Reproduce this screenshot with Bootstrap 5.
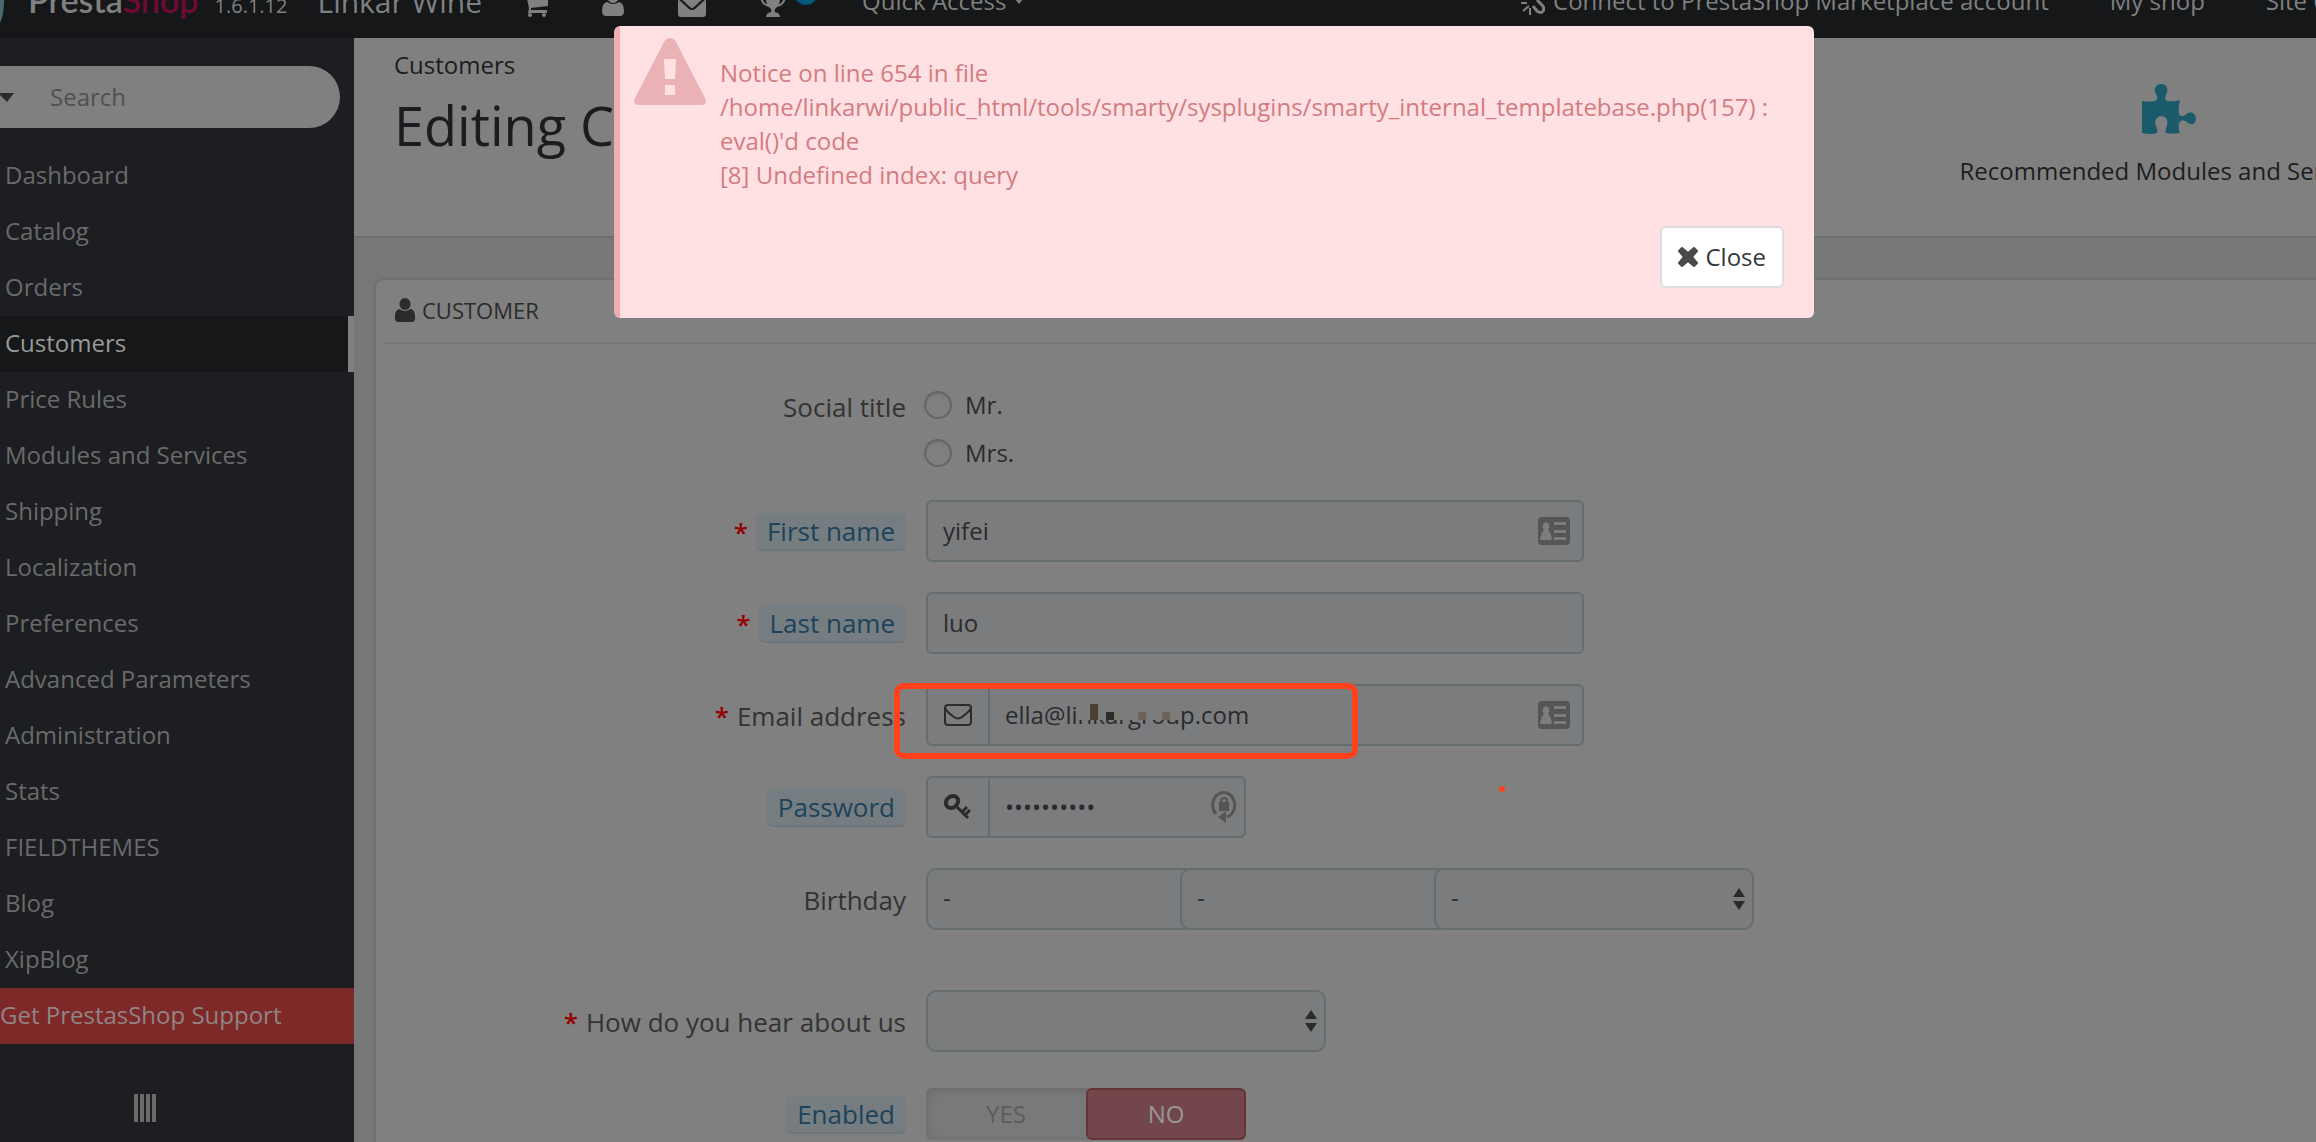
<!DOCTYPE html>
<html lang="en">
<head>
<meta charset="utf-8">
<meta name="viewport" content="width=device-width, initial-scale=1">
<title>Editing Customer</title>
<link rel="stylesheet" href="https://cdn.jsdelivr.net/npm/bootstrap@5.3.0/dist/css/bootstrap.min.css">
<style>
body{font-family:"Open Sans","Noto Sans",sans-serif;font-size:24px;line-height:34px;background:#767877;color:#2b2b2b;min-height:100vh;overflow:hidden}
svg{display:block;fill:currentColor;flex:none}
svg.line-icon{fill:none;stroke:currentColor}
a{text-decoration:none;color:inherit}
/* top bar */
.topbar{height:38px;background:#151718;color:#7f8080;overflow:hidden}
.topbar-inner{height:60px;margin-top:-29px;white-space:nowrap}
.brand-ball{width:16px;height:50px;margin-left:-12px;border-radius:50%;background:#4b6a70}
.brand-row{margin-left:24px;gap:16px}
.brand-name{font:600 34px/40px Lato,"Open Sans",sans-serif;color:#808080}
.brand-name span{color:#6f0a35}
.version{font-size:20px}
.shop-name{font-size:30px;margin-left:14px}
.top-icons{margin-left:44px;gap:54px}
.top-badge{width:24px;height:24px;border-radius:50%;background:#00587d;left:34px;top:-4px}
.quick{margin-left:76px;gap:8px}
.top-right{margin-right:-16px;gap:61px}
/* sidebar */
.sidebar{width:354px;background:#1c1e22;color:#6a6a6a}
.search-pill{height:62px;margin:28px 14px 20px 0;border-radius:0 31px 31px 0;background:#808080;color:#2b2b2b;gap:34px}
.search-pill input{background:none;border:0;outline:0;min-width:0;flex:1;padding:0}
.search-pill input::placeholder{color:#505050;opacity:1}
.side-link{height:56px;padding:0 0 2px 5px;display:flex;align-items:center}
.side-link.current{background:#151718;color:#999;border-right:6px solid #808080}
.side-link.support{background:#7e2827;color:#8f8585;padding-left:0}
.fold-btn{margin:50px 0 0 134px;gap:2px;background:none;border:0;padding:0}
.fold-btn i{width:4px;height:28px;background:#6a6a6a}
/* page header */
.page-head{height:200px;background:#808080;border-bottom:2px solid #6f6f6f;color:#1b1c1f;padding:10px 0 0 40px}
.page-title{font-size:54px;line-height:64px;font-weight:400;margin:11px 0 0}
.toolbar-link{margin:36px -62px 0 0;color:#1d1d1d;gap:20px}
.toolbar-link svg{color:#1a5a6a}
/* panel */
.customer-panel{margin:40px 0 0 20px;background:#808080;border:2px solid #707070;border-width:2px 0 0 2px;border-radius:10px 0 0 0;padding-left:8px}
.panel-title{height:64px;border-bottom:2px solid #777;padding:0 0 2px 10px;gap:6px;font-size:22px;line-height:34px;font-weight:400;margin:0}
.form-area{padding-top:44px}
.form-line{display:flex;align-items:center;gap:20px;margin-bottom:30px}
.form-line.gap-after{margin-bottom:60px}
.form-line.gap-less{margin-bottom:36px}
.label-side{width:522px;font-size:26px;color:#333;gap:8px;padding-top:2px}
.hint{background:#767d80;border-bottom:2px solid #6d777b;border-radius:6px;color:#1c435b;height:38px;line-height:36px;padding:0 11px}
.req{color:#970000;font-weight:600}
.field{height:62px;background:#7b7c7e;border:2px solid #656d70;border-radius:6px;color:#2b2b2b;display:flex;align-items:center;position:relative}
.field input{background:none;border:0;outline:0;color:inherit;flex:1;min-width:0;padding:0 15px 2px;height:100%}
.w-long{width:658px}
.w-short{width:320px}
.w-mid{width:400px}
.addon{width:62px;height:100%;border-right:2px solid #656d70}
.tail{margin-right:12px;color:#555}
.w-short .tail{margin-right:7px}
.picker{appearance:none;height:62px;background:#7b7c7e;border:2px solid #656d70;border-radius:10px;color:#2b2b2b;padding:0 15px 2px;width:100%;display:block}
.picker-wrap{position:relative}
.picker-wrap svg{position:absolute;right:9px;top:20px;pointer-events:none}
.birth .picker-wrap{width:254px}
.birth .picker-wrap:not(:last-child) .picker{width:270px;border-right:0}
.birth .picker-wrap:last-child{width:320px}
.titles{gap:14px}
.titles label{height:34px;gap:13px}
.titles input{appearance:none;width:28px;height:28px;margin:0 0 0 -2px;border:2px solid #666;border-radius:50%;background:#808080;box-shadow:inset 0 2px 2px #747474}
.switch{width:320px;height:52px;border-radius:6px;background:#797979;box-shadow:inset 0 2px 8px #686868}
.switch label{width:50%;color:#5c5c5c}
.switch .on{background:#72464a;border:2px solid #653434;border-radius:6px;color:#979797}
/* error notice */
.notice{position:absolute;left:614px;top:26px;width:1200px;height:292px;background:#ffe1e3;border-left:6px solid #ecafb4;border-radius:6px;color:#d27c82;padding:12px 30px 30px 14px}
.notice-tri{color:#eab2b7}
.notice-text{margin:18px 0 0 14px}
.close-btn,.close-btn:hover{background:#fff;border:2px solid #ddd;border-radius:6px;color:#33383d;font-size:24px;height:62px;padding:0 16px;gap:7px}
/* pen marks drawn over the form */
.pen-frame{position:absolute;left:-34px;top:-3px;width:464px;height:76px;border:6px solid #ff421b;border-radius:10px;pointer-events:none}
.pen-dot{position:absolute;left:571px;top:100px;width:6px;height:6px;border-radius:50%;background:#ff421b}
.blot{position:absolute;left:150px;top:14px}
</style>
<script src="https://cdn.jsdelivr.net/npm/bootstrap@5.3.0/dist/js/bootstrap.bundle.min.js"></script>
</head>
<body class="d-flex flex-column">
<svg width="0" height="0" class="position-absolute" aria-hidden="true">
<symbol id="i-user" viewBox="0 0 22 26"><ellipse cx="11" cy="6.5" rx="6" ry="6.5"/><path d="M5 12q6 4 12 0 5 1 5 9 0 5-4 5H4q-4 0-4-5 0-8 5-9z"/></symbol>
<symbol id="i-card" viewBox="0 0 32 28"><path fill-rule="evenodd" d="M4 0h24q4 0 4 4v20q0 4-4 4H4q-4 0-4-4V4q0-4 4-4zM8 5a4 4.500 0 0 0-2 8q-3 2-4 10h12q-1-8-4-10a4 4.500 0 0 0-2-8zM16 5v3h12V5zm0 8v3h12v-3zm0 7v3h12v-3z"/></symbol>
<symbol id="i-sort" viewBox="0 0 12 22"><path d="M6 0l6 9H0zM6 22l6-9H0z"/></symbol>
</svg>
<header class="topbar flex-shrink-0"><div class="topbar-inner d-flex align-items-center">
<span class="brand-ball"></span>
<div class="brand-row d-flex align-items-baseline"><a href="#" class="brand-name">Presta<span>Shop</span></a><span class="version">1.6.1.12</span><a href="#" class="shop-name">Linkar Wine</a></div>
<div class="top-icons d-flex">
<a href="#" aria-label="Orders"><svg width="22" height="32" viewBox="0 0 22 32"><path d="M0 6h4l1 3h17v12L5 23v2h16v3H2l1-5L0 9z"/><circle cx="4" cy="30" r="2"/><circle cx="18" cy="30" r="2"/></svg></a>
<a href="#" aria-label="Customers" class="pt-1"><svg width="22" height="28"><use href="#i-user"/></svg></a>
<a href="#" aria-label="Messages"><svg width="28" height="32" viewBox="0 0 28 32"><path d="M2 9h24q2 0 2 2l-12 11q-2 2-4 0L0 11q0-2 2-2zM0 14l11 10q3 2 6 0l11-10v15q0 3-3 3H3q-3 0-3-3z"/></svg></a>
<a href="#" aria-label="Badges" class="position-relative"><svg width="26" height="32" viewBox="0 0 26 32"><path d="M6 6h14v8q0 6-4 9-2 2-1 4 5 1 5 5H6q0-4 5-5 1-2-1-4-4-3-4-9z"/><path d="M6 10H1q0 10 9 11m10-11h5q0 10-9 11" fill="none" stroke="currentColor" stroke-width="2"/></svg><span class="top-badge position-absolute"></span></a>
</div>
<a href="#" class="quick d-flex align-items-center">Quick Access<svg width="10" height="8" viewBox="0 0 10 8"><path d="M0 1h10L5 7z"/></svg></a>
<nav class="top-right d-flex ms-auto"><a href="#" class="d-flex align-items-center gap-2"><svg class="line-icon" width="24" height="28" viewBox="0 0 24 28" stroke-width="2"><path d="M0 16h6M2 24l6-5M9 28v-7"/><path d="M12 19l4 5q4 3 6 0t-1-6l-5-5" stroke-width="3"/></svg>Connect to PrestaShop Marketplace account</a><a href="#">My shop</a><a href="#">Site O</a></nav>
</div></header>
<div class="d-flex flex-grow-1">
<nav class="sidebar flex-shrink-0">
<form class="search-pill d-flex align-items-center"><svg width="16" height="10" viewBox="0 0 16 10"><path d="M-2 1h16L7 10z"/></svg><input type="search" placeholder="Search" aria-label="Search"></form>
<a class="side-link" href="#">Dashboard</a>
<a class="side-link" href="#">Catalog</a>
<a class="side-link" href="#">Orders</a>
<a class="side-link current" href="#">Customers</a>
<a class="side-link" href="#">Price Rules</a>
<a class="side-link" href="#">Modules and Services</a>
<a class="side-link" href="#">Shipping</a>
<a class="side-link" href="#">Localization</a>
<a class="side-link" href="#">Preferences</a>
<a class="side-link" href="#">Advanced Parameters</a>
<a class="side-link" href="#">Administration</a>
<a class="side-link" href="#">Stats</a>
<a class="side-link" href="#">FIELDTHEMES</a>
<a class="side-link" href="#">Blog</a>
<a class="side-link" href="#">XipBlog</a>
<a class="side-link support" href="#">Get PrestasShop Support</a>
<button type="button" class="fold-btn d-flex" aria-label="Collapse menu"><i></i><i></i><i></i><i></i></button>
</nav>
<main class="flex-grow-1 d-flex flex-column">
<div class="page-head d-flex justify-content-between">
<div><a href="#">Customers</a><h1 class="page-title">Editing Customer</h1></div>
<a href="#" class="toolbar-link d-flex flex-column align-items-center text-nowrap"><svg width="54" height="50" viewBox="0 0 54 50"><path d="M0 17Q7 18 13 17 17 15 14 10 12 6 13 4 15 0 19 0 24 0 25 4 26 7 24 11 22 15 25 17 31 18 38 16 36 24 37 30 39 34 43 31 47 27 51 29 54 31 54 34 54 38 51 40 48 41 45 38 40 34 37 39 36 44 38 49 31 50 24 49 23 46 25 41 26 36 24 34 19 30 15 34 12 37 14 42 16 46 15 49 8 51 0 49z"/></svg>Recommended Modules and Services</a>
</div>
<section class="customer-panel flex-grow-1">
<h2 class="panel-title d-flex align-items-center"><svg width="22" height="24"><use href="#i-user"/></svg>CUSTOMER</h2>
<form class="form-area">
<div class="form-line align-items-start"><div class="label-side d-flex justify-content-end flex-shrink-0">Social title</div>
<div class="titles d-flex flex-column"><label class="d-flex align-items-center"><input type="radio" name="t">Mr.</label><label class="d-flex align-items-center"><input type="radio" name="t">Mrs.</label></div></div>
<div class="form-line"><label for="fn" class="label-side d-flex align-items-center justify-content-end flex-shrink-0"><span class="req">*</span><span class="hint">First name</span></label>
<div class="field w-long"><input id="fn" type="text" value="yifei"><svg class="tail" width="32" height="28"><use href="#i-card"/></svg></div></div>
<div class="form-line"><label for="ln" class="label-side d-flex align-items-center justify-content-end flex-shrink-0"><span class="req">*</span><span class="hint">Last name</span></label>
<div class="field w-long"><input id="ln" type="text" value="luo"></div></div>
<div class="form-line"><label for="em" class="label-side d-flex align-items-center justify-content-end flex-shrink-0"><span class="req">*</span><span>Email address</span></label>
<div class="field w-long"><span class="addon d-flex align-items-center justify-content-center"><svg class="line-icon" width="28" height="22" viewBox="0 0 28 22" stroke-width="2"><rect x="1" y="1" width="26" height="20" rx="3"/><path d="M1 4q2 4 9 9 4 3 8 0 7-5 9-9"/></svg></span><input id="em" type="text" value="ella@linkargroup.com"><svg class="tail" width="32" height="28"><use href="#i-card"/></svg>
<svg class="blot" width="104" height="20" viewBox="0 0 104 20"><path fill="#7b7c7e" d="M0 0h102v20H0z"/><path fill="#7d7b74" d="M0 12h4v6H0zM36 12h8v8h-8zM92 12h8v8h-8z"/><path fill="#4c4033" d="M12 4h8v16h-8z"/><path fill="#2b2b2b" d="M28 12h8v8h-8z"/><path fill="#6e6157" d="M60 12h8v8h-8zM84 12h8v8h-8z"/></svg>
<span class="pen-frame"></span><span class="pen-dot"></span></div></div>
<div class="form-line"><label for="pw" class="label-side d-flex align-items-center justify-content-end flex-shrink-0"><span class="hint">Password</span></label>
<div class="field w-short"><span class="addon d-flex align-items-center justify-content-center"><svg class="line-icon" width="28" height="26" viewBox="0 0 28 26" stroke-width="4"><ellipse cx="8" cy="8" rx="6.500" ry="5.500" transform="rotate(-40 8 8)"/><path d="M12 12l12 12M18 18l5-5M21 21l5-5" stroke-width="3"/></svg></span><input id="pw" type="password" value="abcdefghij"><svg class="tail" width="26" height="34" viewBox="0 0 26 34"><path d="M5 24A11 12.500 0 1 1 16 27" fill="none" stroke="currentColor" stroke-width="3"/><path d="M7 27l8-6v12zM8 12h10v9H8z"/><path d="M10 13v-2q0-3 3-3t3 3v2" fill="none" stroke="currentColor" stroke-width="2"/></svg></div></div>
<div class="form-line gap-after"><label for="bd" class="label-side d-flex align-items-center justify-content-end flex-shrink-0">Birthday</label>
<div class="birth d-flex"><div class="picker-wrap"><select id="bd" class="picker"><option>-</option></select></div><div class="picker-wrap"><select class="picker" aria-label="Month"><option>-</option></select></div><div class="picker-wrap"><select class="picker" aria-label="Year"><option>-</option></select><svg width="12" height="22"><use href="#i-sort"/></svg></div></div></div>
<div class="form-line gap-less"><label for="hw" class="label-side d-flex align-items-center justify-content-end flex-shrink-0"><span class="req">*</span><span>How do you hear about us</span></label>
<div class="picker-wrap w-mid"><select id="hw" class="picker"><option></option></select><svg width="12" height="22"><use href="#i-sort"/></svg></div></div>
<div class="form-line mb-0"><div class="label-side d-flex align-items-center justify-content-end flex-shrink-0"><span class="hint">Enabled</span></div>
<div class="switch d-flex"><label class="d-flex align-items-center justify-content-center"><input type="radio" name="en" class="visually-hidden">YES</label><label class="on d-flex align-items-center justify-content-center"><input type="radio" name="en" class="visually-hidden" checked>NO</label></div></div>
</form>
</section>
</main>
</div>
<div class="notice d-flex flex-column" role="alert">
<div class="d-flex align-items-start"><svg class="notice-tri" width="72" height="67" viewBox="0 0 72 67"><path fill-rule="evenodd" d="M36 0q4 0 6 4l29 56q3 7-4 7H5q-7 0-4-7L30 4q2-4 6-4zM30 21l1 20h10l1-20zM31 47v10h10V47z"/></svg>
<div class="notice-text">Notice on line 654 in file<br>/home/linkarwi/public_html/tools/smarty/sysplugins/smarty_internal_templatebase.php(157) : eval()'d code<br>[8] Undefined index: query</div></div>
<button type="button" class="btn close-btn mt-auto align-self-end d-flex align-items-center"><svg width="20" height="20" viewBox="0 0 20 20"><path d="M4 1l6 5 6-5 3 3-5 6 5 6-3 3-6-5-6 5-3-3 5-6-5-6z" fill="#4a4a4a" stroke="#4a4a4a" stroke-width="2" stroke-linejoin="round"/></svg>Close</button>
</div>
</body>
</html>
